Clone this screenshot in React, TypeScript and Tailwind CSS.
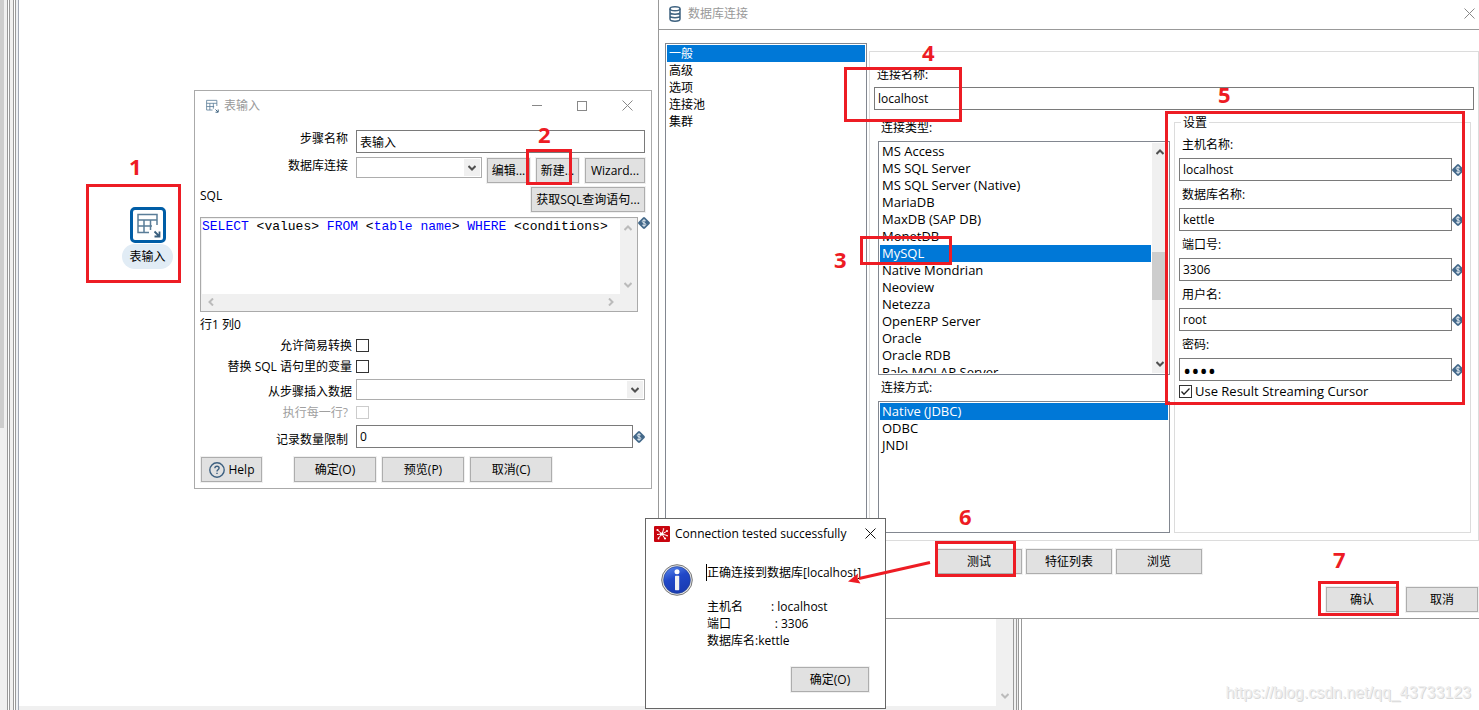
import { useId, type ReactNode } from 'react';
import { twMerge } from 'tailwind-merge';

const DATABASES = [
  'MS Access',
  'MS SQL Server',
  'MS SQL Server (Native)',
  'MariaDB',
  'MaxDB (SAP DB)',
  'MonetDB',
  'MySQL',
  'Native Mondrian',
  'Neoview',
  'Netezza',
  'OpenERP Server',
  'Oracle',
  'Oracle RDB',
  'Palo MOLAP Server',
];

const SETTINGS = [
  { label: '主机名称:', value: 'localhost', type: 'text' },
  { label: '数据库名称:', value: 'kettle', type: 'text' },
  { label: '端口号:', value: '3306', type: 'text' },
  { label: '用户名:', value: 'root', type: 'text' },
  { label: '密码:', value: 'root', type: 'password' },
];

// numbered steps: frame + digit
const STEPS = [
  { n: 1, box: 'left-[86px] top-[184px] w-[95px] h-[99px]', num: 'left-[129px] top-[153px]' },
  { n: 2, box: 'left-[526px] top-[149px] w-[46px] h-[36px]', num: 'left-[538px] top-[121px]' },
  { n: 3, box: 'left-[860px] top-[236px] w-[92px] h-[29px]', num: 'left-[834px] top-[246px]' },
  { n: 4, box: 'left-[844px] top-[67px] w-[118px] h-[55px]', num: 'left-[922px] top-[39px]' },
  { n: 5, box: 'left-[1165px] top-[111px] w-[300px] h-[294px]', num: 'left-[1218px] top-[81px]' },
  { n: 6, box: 'left-[935px] top-[541px] w-[81px] h-[36px]', num: 'left-[959px] top-[503px]' },
  { n: 7, box: 'left-[1318px] top-[581px] w-[81px] h-[35px]', num: 'left-[1333px] top-[546px]' },
];

function Button({ className, children }: { className?: string; children: ReactNode }) {
  return (
    <button
      type="button"
      className={twMerge(
        'flex h-[25px] shrink-0 items-center justify-center whitespace-nowrap border border-[#adadad] bg-[#e1e1e1] shadow-[0_0_0_1px_#f0f0f0]',
        className,
      )}
    >
      {children}
    </button>
  );
}

function TextInput({ className, ...props }: React.ComponentProps<'input'>) {
  return (
    <input
      className={twMerge('h-[23px] min-w-0 border border-[#7a7a7a] bg-white px-[3px] outline-none', className)}
      {...props}
    />
  );
}

function Chevron({ className }: { className?: string }) {
  return (
    <svg viewBox="0 0 8 6" className={twMerge('h-[6px] w-[8px] fill-none', className)} strokeWidth="2">
      <path d="M0.5 1 L4 4.5 L7.5 1" />
    </svg>
  );
}

function Combo({ id, className }: { id: string; className?: string }) {
  return (
    <div className={twMerge('relative h-[21px]', className)}>
      <select id={id} className="h-full w-full appearance-none border border-[#adadad] bg-white outline-none">
        <option value=""></option>
      </select>
      <span className="pointer-events-none absolute inset-y-[2px] right-[2px] flex w-4 items-center justify-center bg-[#f0f0f0]">
        <Chevron className="stroke-[#505050]" />
      </span>
    </div>
  );
}

function Checkbox({ className, ...props }: React.ComponentProps<'input'>) {
  return (
    <span className="relative flex h-[13px] w-[13px] shrink-0">
      <input
        type="checkbox"
        className={twMerge('peer h-[13px] w-[13px] appearance-none border border-[#333] bg-white', className)}
        {...props}
      />
      <svg
        viewBox="0 0 13 13"
        className="pointer-events-none absolute inset-0 hidden fill-none stroke-[#222] peer-checked:block"
        strokeWidth="1.3"
      >
        <path d="M2.5 6.5 L5 9.3 L10.5 3.5" />
      </svg>
    </span>
  );
}

// the "variable allowed" diamond next to fields
function VarIcon() {
  return (
    <svg viewBox="0 0 12 12" className="h-3 w-3 shrink-0">
      <path d="M5 0.5 Q6 -0.3 7 0.5 L11.5 5 Q12.3 6 11.5 7 L7 11.5 Q6 12.3 5 11.5 L0.5 7 Q-0.3 6 0.5 5 Z" fill="#44698a" />
      <path
        d="M7.8 4.1 Q7.2 3.2 6 3.2 Q4.3 3.2 4.3 4.5 Q4.3 5.6 6 5.9 Q7.8 6.3 7.8 7.5 Q7.8 8.8 6 8.8 Q4.7 8.8 4.1 7.8 M6 2.2 V9.8"
        fill="none"
        stroke="#dfe8ef"
        strokeWidth="1"
      />
    </svg>
  );
}

function TableIcon({ className }: { className?: string }) {
  return (
    <svg viewBox="0 0 26 26" className={className} fill="none" stroke="#5a7d98" strokeWidth="1.5">
      <path d="M14 20.5 H3 V2.5 H22 V13 M3 8 H22 M3 14 H17 M9 8 V20.5 M15.5 8 V18" />
      <path d="M19.5 19.5 L24 24 M24.5 19.5 V24.5 H19.5" stroke="#3a5f7d" strokeWidth="1.8" />
    </svg>
  );
}

function CloseIcon({ className }: { className?: string }) {
  return (
    <svg viewBox="0 0 11 11" className={twMerge('h-[11px] w-[11px] stroke-[#888]', className)}>
      <path d="M0.5 0.5 L10.5 10.5 M10.5 0.5 L0.5 10.5" />
    </svg>
  );
}

function ListBox({ items, selected, label, className }: {
  items: string[];
  selected: string;
  label: string;
  className?: string;
}) {
  return (
    <ul role="listbox" aria-label={label} className={twMerge('min-w-0 flex-1 overflow-hidden leading-[17px]', className)}>
      {items.map((item) => (
        <li
          key={item}
          role="option"
          aria-selected={item === selected}
          className={twMerge('h-[17px] whitespace-nowrap px-[2px]', item === selected && 'bg-[#0078d7] text-white')}
        >
          {item}
        </li>
      ))}
    </ul>
  );
}

function Label({ htmlFor, className, children }: { htmlFor?: string; className?: string; children: ReactNode }) {
  return (
    <label htmlFor={htmlFor} className={twMerge('w-[152px] shrink-0 text-right', className)}>
      {children}
    </label>
  );
}

function TableInputWindow() {
  const id = useId();
  return (
    <section className="absolute left-[194px] top-[90px] w-[458px] border border-[#aaa] bg-white">
      <header className="flex h-[29px] items-center pl-[10px] pr-[18px] text-[#999]">
        <TableIcon className="h-[14px] w-[14px]" />
        <h2 className="ml-[5px] flex-1">表输入</h2>
        <div className="flex items-center gap-[35px]">
          <button type="button" aria-label="minimize" className="h-px w-[10px] bg-[#888]" />
          <button type="button" aria-label="maximize" className="h-[10px] w-[10px] border border-[#888]" />
          <button type="button" aria-label="close">
            <CloseIcon />
          </button>
        </div>
      </header>

      <form className="pb-[6px] pl-[5px] pr-[6px] pt-[10px]">
        <div className="flex gap-1">
          <Label htmlFor={`${id}-name`} className="pr-1">步骤名称</Label>
          <TextInput id={`${id}-name`} defaultValue="表输入" className="flex-1" />
        </div>

        <div className="mt-1 flex h-[26px] items-end">
          <Label htmlFor={`${id}-conn`} className="mr-1 self-start pr-1">数据库连接</Label>
          <Combo id={`${id}-conn`} className="min-w-0 flex-1 self-start" />
          <div className="ml-[5px] flex gap-[6px]">
            <Button className="w-[43px]">编辑...</Button>
            <Button className="w-[43px]">新建...</Button>
            <Button className="w-[60px]">Wizard...</Button>
          </div>
        </div>

        <div className="mt-1 flex justify-between">
          <span>SQL</span>
          <Button className="w-[114px]">获取SQL查询语句...</Button>
        </div>

        <div className="-mr-[5px] mt-[5px] flex">
          <div className="grid h-[95px] min-w-0 flex-1 grid-cols-[1fr_16px] grid-rows-[1fr_16px] border border-[#aaa] bg-[#f0f0f0] p-px">
            <pre
              role="textbox"
              aria-label="SQL"
              className="overflow-hidden bg-white font-['Liberation_Mono',monospace] text-[13px] leading-4 text-black"
            >
              <span className="text-[#00f]">SELECT</span> &lt;values&gt; <span className="text-[#00f]">FROM</span> &lt;
              <span className="text-[#00f]">table name</span>&gt; <span className="text-[#00f]">WHERE</span>{' '}
              &lt;conditions&gt;
            </pre>
            <div className="flex flex-col items-center justify-between py-[6px]">
              <Chevron className="rotate-180 stroke-[#bbb]" />
              <Chevron className="stroke-[#bbb]" />
            </div>
            <div className="flex items-center justify-between px-[5px]">
              <Chevron className="rotate-90 stroke-[#bbb]" />
              <Chevron className="-rotate-90 stroke-[#bbb]" />
            </div>
          </div>
          <VarIcon />
        </div>

        <p className="mt-1">行1 列0</p>

        <div className="mt-[2px] flex h-[21px] items-center gap-1">
          <Label htmlFor={`${id}-lazy`}>允许简易转换</Label>
          <Checkbox id={`${id}-lazy`} />
        </div>
        <div className="flex h-[21px] items-center gap-1">
          <Label htmlFor={`${id}-vars`}>替换 SQL 语句里的变量</Label>
          <Checkbox id={`${id}-vars`} />
        </div>
        <div className="mt-[2px] flex items-end gap-1">
          <Label htmlFor={`${id}-step`}>从步骤插入数据</Label>
          <Combo id={`${id}-step`} className="flex-1" />
        </div>
        <div className="mt-[2px] flex h-[21px] items-center gap-1">
          <Label htmlFor={`${id}-each`} className="pr-1 text-[#a0a0a0]">执行每一行?</Label>
          <Checkbox id={`${id}-each`} disabled className="border-[#ccc]" />
        </div>
        <div className="mt-[2px] flex items-end">
          <Label htmlFor={`${id}-limit`} className="mr-1 pr-1">记录数量限制</Label>
          <TextInput id={`${id}-limit`} defaultValue="0" className="flex-1" />
          <span className="self-center">
            <VarIcon />
          </span>
        </div>

        <div className="mt-[9px] flex gap-[6px] pl-px">
          <Button className="mr-[26px] w-[61px] gap-1">
            <svg viewBox="0 0 16 16" className="h-4 w-4 fill-none stroke-[#3d6080]" strokeWidth="1.4">
              <circle cx="8" cy="8" r="7.2" />
              <path d="M5.9 6.3 Q5.9 4.3 8 4.3 Q10.1 4.3 10.1 6.1 Q10.1 7.2 8.9 7.8 Q8 8.3 8 9.4 M8 10.7 V12" />
            </svg>
            Help
          </Button>
          <Button className="w-[82px]">确定(O)</Button>
          <Button className="w-[82px]">预览(P)</Button>
          <Button className="w-[82px]">取消(C)</Button>
        </div>
      </form>
    </section>
  );
}

function ConnectionWindow() {
  const id = useId();
  return (
    <section className="absolute left-[658px] right-0 top-0 border-b border-l border-[#999] bg-white">
      <header className="flex h-[30px] items-center border-b border-[#999] pl-[10px] pr-1 pb-[2px] text-[#999]">
        <svg viewBox="0 0 12 16" className="h-4 w-3" fill="none" stroke="#3f6380" strokeWidth="1.5">
          <ellipse cx="6" cy="2.8" rx="5" ry="2" />
          <path d="M1 2.8 V13 Q1 15.2 6 15.2 Q11 15.2 11 13 V2.8 M1 6 Q1 8.2 6 8.2 Q11 8.2 11 6 M1 9.5 Q1 11.7 6 11.7 Q11 11.7 11 9.5" />
        </svg>
        <h2 className="ml-[7px] flex-1">数据库连接</h2>
        <button type="button" aria-label="close">
          <CloseIcon />
        </button>
      </header>

      <div className="flex gap-[2px] pl-[6px] pt-[13px]">
        <div className="flex w-[202px] shrink-0 border border-[#828790] p-px">
          <ListBox label="分类" items={['一般', '高级', '选项', '连接池', '集群']} selected="一般" />
        </div>

        <div className="mt-2 min-w-0 flex-1 border border-[#dcdcdc] px-1 pb-[7px] pt-[14px]">
          <label htmlFor={`${id}-name`} className="block pl-[3px]">连接名称:</label>
          <TextInput id={`${id}-name`} defaultValue="localhost" className="mt-1 block w-full" />

          <div className="flex gap-1 pl-1 pr-[3px]">
            <div className="flex w-[292px] shrink-0 flex-col pt-[9px]">
              <span className="pl-[3px]">连接类型:</span>
              <div className="mt-[5px] flex h-[234px] border border-[#828790] p-px">
                <ListBox label="连接类型" items={DATABASES} selected="MySQL" className="text-[13px]" />
                <div className="ml-px flex w-4 flex-col items-center justify-between bg-[#f0f0f0] py-[6px]">
                  <Chevron className="rotate-180 stroke-[#505050]" />
                  <span className="mt-9 h-12 w-full bg-[#cdcdcd]" />
                  <Chevron className="stroke-[#505050]" />
                </div>
              </div>
              <span className="mt-1 pl-[3px]">连接方式:</span>
              <div className="mt-[5px] flex h-[132px] border border-[#828790] p-px">
                <ListBox
                  label="连接方式"
                  items={['Native (JDBC)', 'ODBC', 'JNDI']}
                  selected="Native (JDBC)"
                  className="text-[13px]"
                />
              </div>
            </div>

            <fieldset className="mt-1 min-w-0 flex-1 border border-[#dcdcdc] pl-1 pr-[6px]">
              <legend className="ml-[2px] px-[2px]">设置</legend>
              {SETTINGS.map((s, i) => (
                <div key={s.label} className="pt-[5px]">
                  <label htmlFor={`${id}-${i}`} className="block pl-[3px]">{s.label}</label>
                  <div className="mt-[5px] flex items-center">
                    <TextInput
                      id={`${id}-${i}`}
                      type={s.type}
                      defaultValue={s.value}
                      className={twMerge('flex-1', s.type === 'password' && 'text-[22px]')}
                    />
                    <VarIcon />
                  </div>
                </div>
              ))}
              <label className="mt-[2px] flex items-center gap-[3px] text-[13px]">
                <Checkbox defaultChecked />
                Use Result Streaming Cursor
              </label>
            </fieldset>
          </div>
        </div>
      </div>

      <div className="mt-2 flex justify-center gap-1">
        <Button className="w-[86px]">测试</Button>
        <Button className="w-[86px]">特征列表</Button>
        <Button className="w-[86px]">浏览</Button>
      </div>
      <div className="mt-[13px] flex justify-end gap-2 pb-[6px] pr-px">
        <Button className="w-[72px]">确认</Button>
        <Button className="w-[72px]">取消</Button>
      </div>
    </section>
  );
}

function SuccessDialog() {
  return (
    <section role="dialog" className="absolute left-[645px] top-[518px] w-[241px] border border-[#666] bg-white px-2 pb-4">
      <header className="flex h-[29px] items-center">
        <svg viewBox="0 0 16 16" className="h-4 w-4">
          <rect width="16" height="16" rx="1" fill="#c8040e" />
          <path
            d="M8 8 L4 4.5 M8 8 L9.5 3.5 M8 8 L12.5 5.5 M8 8 L13 9.5 M8 8 L10.5 12 M8 8 L4.5 12 M8 8 L3 8.5"
            stroke="#fff"
            strokeWidth="1"
          />
          <g fill="#fff">
            <circle cx="7.5" cy="8" r="1.6" />
            <circle cx="3.5" cy="4" r="1.1" />
            <circle cx="9.5" cy="3" r="0.8" />
            <circle cx="13" cy="5" r="1" />
            <circle cx="13.2" cy="9.8" r="0.8" />
            <circle cx="11" cy="12.5" r="1.1" />
            <circle cx="4.5" cy="12.5" r="0.9" />
          </g>
        </svg>
        <h2 className="ml-[5px] flex-1 whitespace-nowrap">Connection tested successfully</h2>
        <button type="button" aria-label="close">
          <CloseIcon className="mr-px stroke-[#111]" />
        </button>
      </header>

      <div className="flex gap-[14px] pl-[7px] pt-4">
        <svg viewBox="0 0 32 32" className="h-8 w-8 shrink-0">
          <defs>
            <linearGradient id="info" x1="0" y1="0" x2="0.4" y2="1">
              <stop offset="0" stopColor="#5f8df0" />
              <stop offset="0.5" stopColor="#2148c8" />
              <stop offset="1" stopColor="#1a3cb4" />
            </linearGradient>
          </defs>
          <circle cx="16" cy="16" r="15.3" fill="#e4e4e4" stroke="#777" />
          <circle cx="16" cy="16" r="13.4" fill="url(#info)" stroke="#24418f" strokeWidth="0.6" />
          <circle cx="16" cy="7.8" r="2.5" fill="#fff" />
          <rect x="14" y="11.8" width="4.2" height="14.4" rx="0.6" fill="#f2f2f2" />
        </svg>
        <div className="whitespace-pre">
          <p className="-ml-px border-l border-black">正确连接到数据库[localhost]</p>
          <p className="mt-[17px]">{'主机名         : localhost'}</p>
          <p>{'端口              : 3306'}</p>
          <p>数据库名:kettle</p>
        </div>
      </div>
      <Button className="ml-auto mr-2 mt-[18px] w-[78px]">确定(O)</Button>
    </section>
  );
}

function Desktop() {
  return (
    <div className="flex h-screen">
      <div className="w-[7px] bg-[#f0f0f0]">
        <div className="h-[428px] w-1 bg-[#cdcdcd]" />
      </div>
      <div className="w-[3px] border-x border-[#999]" />
      <div className="w-[3px] bg-[#f0f0f0]" />
      <div className="w-[3px] border-x border-[#999]" />
      <div className="w-[3px] border-r border-[#a0a7b4] bg-[#eef1f5]" />
      <div className="grid w-[994px] grid-cols-[1fr_17px] grid-rows-[1fr_4px] bg-[#f0f0f0]">
        <div className="bg-white" />
        <div className="flex flex-col items-center justify-end pb-[7px]">
          <Chevron className="stroke-[#bbb]" />
        </div>
      </div>
      <div className="w-[4px] border-x border-[#999] bg-[#f0f0f0]" />
      <div className="w-px bg-[#f0f0f0]" />
      <div className="w-[4px] border-x border-[#999]" />
    </div>
  );
}

export default function App() {
  return (
    <main className="relative h-screen overflow-hidden bg-white font-['Open_Sans','Noto_Sans_CJK_SC',sans-serif] text-[12px] leading-[17px] text-black">
      <Desktop />

      {/* canvas node */}
      <div className="absolute left-[122px] top-[207px] flex w-[51px] flex-col items-center">
        <div className="flex h-9 w-9 items-center justify-center rounded-[5px] border-[3px] border-[#005da6] bg-white">
          <TableIcon className="h-[26px] w-[26px]" />
        </div>
        <span className="mt-px flex h-[25px] w-full items-center justify-center rounded-full bg-[#e1ecf5]">表输入</span>
      </div>

      <TableInputWindow />
      <ConnectionWindow />
      <SuccessDialog />

      {STEPS.map((s) => (
        <div
          key={s.n}
          className="pointer-events-none font-['Noto_Sans',sans-serif] text-[22px] leading-[26px] font-bold text-[#ed1c24]"
        >
          <div className={twMerge('absolute border-[3px] border-[#ed1c24]', s.box)} />
          <span className={twMerge('absolute', s.num)}>{s.n}</span>
        </div>
      ))}
      <svg viewBox="0 0 84 24" className="pointer-events-none absolute left-[847px] top-[560px] h-6 w-[84px]">
        <path d="M83 2.5 L12 18.5" stroke="#ed1c24" strokeWidth="3" />
        <path d="M1 21.5 L11 13.5 L10.5 18.5 L13.5 23.5 Z" fill="#ed1c24" />
      </svg>

      <span className="absolute bottom-[9px] right-2 font-['Liberation_Sans',sans-serif] text-[16px] text-[#eee] [text-shadow:1px_1px_0_#d8d8d8]">
        https://blog.csdn.net/qq_43733123
      </span>
    </main>
  );
}
